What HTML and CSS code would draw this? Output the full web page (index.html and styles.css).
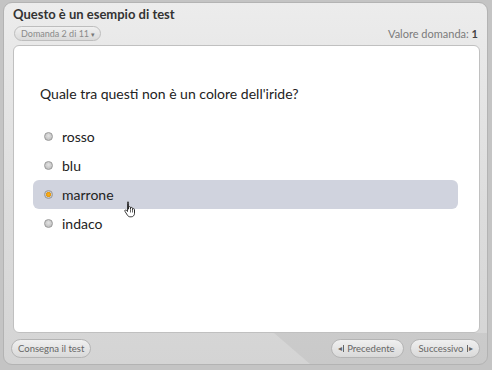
FILE: index.html
```html
<!DOCTYPE html>
<html lang="it">
<head>
<meta charset="utf-8">
<link rel="stylesheet" href="styles.css">
</head>
<body>
<div class="panel">
  <div class="header">
    <div class="title">Questo è un esempio di test</div>
    <div class="subrow">
      <span class="pill">Domanda 2 di 11 <span class="caret">▾</span></span>
      <span class="value">Valore domanda: <b>1</b></span>
    </div>
  </div>
  <div class="content">
    <div class="question">Quale tra questi non è un colore dell'iride?</div>
    <ul class="options">
      <li class="option"><span class="radio"></span>rosso</li>
      <li class="option"><span class="radio"></span>blu</li>
      <li class="option hover"><span class="radio sel"></span>marrone
        <svg class="cursor" width="13" height="17" viewBox="0 0 13 17"><path d="M3.5 1.2c.6 0 1 .4 1 1v6V6.6c0-.6.4-1 1-1s1 .4 1 1v1.6-.8c0-.6.4-1 1-1s1 .4 1 1v1.2c0-.6.4-1 1-1s1 .4 1 1v3.6c0 2.2-1.3 3.6-3.3 3.6H6.1c-1.2 0-2-.6-2.7-1.6L1 10.4c-.3-.5-.2-1.1.3-1.4.5-.3 1-.1 1.3.3l.9 1.2V2.2c0-.6.4-1 1-1z" fill="#fff" stroke="#222" stroke-width=".9" stroke-linejoin="round"/><path d="M6.5 8.5v3M8.5 8.5v3M10.5 9v2.5" stroke="#222" stroke-width=".7"/></svg>
      </li>
      <li class="option"><span class="radio"></span>indaco</li>
    </ul>
  </div>
  <div class="footer">
    <span class="btn">Consegna il test</span>
    <span class="navs">
      <span class="btn"><span class="arr">◂</span><span class="bar"></span><span class="lbl">Precedente</span></span>
      <span class="btn"><span class="lbl">Successivo</span><span class="bar"></span><span class="arr">▸</span></span>
    </span>
  </div>
</div>
</body>
</html>
```

FILE: styles.css
```css
html, body {
  margin: 0;
  padding: 0;
}
body {
  width: 492px;
  height: 370px;
  background: #c4c4c4;
  font-family: "Lato", "Open Sans", sans-serif;
  overflow: hidden;
}
.panel {
  box-sizing: border-box;
  margin: 2px 4px 0 3px;
  width: 485px;
  height: 363px;
  border: 1px solid #b3b3b3;
  border-radius: 9px;
  background: linear-gradient(#ececec, #dcdcdc 60%, #d4d4d4);
  display: flex;
  flex-direction: column;
  overflow: hidden;
}
.header {
  height: 42px;
  box-sizing: border-box;
  padding: 3px 8px 0 9px;
}
.title {
  font-weight: bold;
  font-size: 13px;
  color: #333;
  line-height: 16px;
}
.subrow {
  display: flex;
  justify-content: space-between;
  align-items: center;
  margin-top: 4px;
}
.pill {
  box-sizing: border-box;
  height: 15px;
  line-height: 13px;
  padding: 0 5px 0 6px;
  border: 1px solid #bdbdbd;
  border-radius: 8px;
  background: linear-gradient(#f0f0f0, #dadada);
  font-size: 9px;
  color: #8a8a8a;
  margin-left: 1px;
}
.caret {
  font-size: 7px;
  color: #777;
}
.value {
  font-size: 11px;
  color: #7b7b7b;
  margin-right: 1px;
}
.value b {
  color: #444;
}
.content {
  position: relative;
  height: 288px;
  box-sizing: border-box;
  margin: 0 7px 0 9px;
  background: #fff;
  border: 1px solid #c0c0c0;
  border-radius: 6px;
  padding: 38px 21px 0 19px;
}
.question {
  font-size: 14px;
  color: #222;
  line-height: 20px;
  padding-left: 7px;
}
.options {
  list-style: none;
  margin: 18px 0 0 0;
  padding: 0;
}
.option {
  position: relative;
  height: 29px;
  display: flex;
  align-items: center;
  font-size: 14px;
  color: #222;
  padding-left: 11px;
  border-radius: 6px;
}
.option.hover {
  background: #d0d3de;
}
.radio {
  box-sizing: border-box;
  width: 9px;
  height: 9px;
  border-radius: 50%;
  border: 1px solid #9a9a9a;
  background: radial-gradient(circle at 50% 40%, #e4e4e4, #b4b4b4);
  margin-right: 9px;
}
.radio.sel {
  background: radial-gradient(circle, #f6b020 0, #e89a10 45%, #c8c8c8 55%, #bdbdbd);
}
.cursor {
  position: absolute;
  left: 91px;
  top: 21px;
}
.footer {
  position: relative;
  flex: 1;
  display: flex;
  justify-content: space-between;
  align-items: center;
  padding: 0 7px 0 7px;
}
.footer::before {
  content: "";
  position: absolute;
  inset: 0;
  background: rgba(0, 0, 0, 0.05);
  clip-path: polygon(270px 0, 100% 0, 100% 100%, 306px 100%);
}
.navs {
  position: relative;
  display: flex;
  gap: 6px;
}
.btn {
  position: relative;
  box-sizing: border-box;
  height: 19px;
  line-height: 17px;
  padding: 0 6px;
  border: 1px solid #b4b4b4;
  border-radius: 10px;
  background: linear-gradient(#f0f0f0, #d9d9d9);
  font-size: 9.5px;
  color: #666;
  display: inline-flex;
  align-items: center;
  gap: 1px;
}
.lbl {
  margin: 0 2px;
}
.arr {
  font-size: 8px;
  color: #666;
}
.bar {
  display: inline-block;
  width: 1.5px;
  height: 7px;
  background: #666;
}
```
